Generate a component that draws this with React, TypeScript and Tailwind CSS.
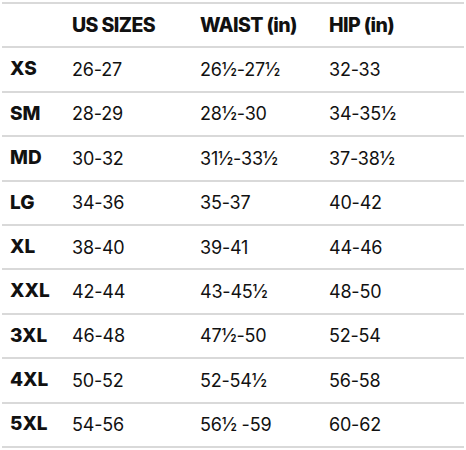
import React from "react";

const rows: [string, string, string, string][] = [
  ["XS", "26-27", "26½-27½", "32-33"],
  ["SM", "28-29", "28½-30", "34-35½"],
  ["MD", "30-32", "31½-33½", "37-38½"],
  ["LG", "34-36", "35-37", "40-42"],
  ["XL", "38-40", "39-41", "44-46"],
  ["XXL", "42-44", "43-45½", "48-50"],
  ["3XL", "46-48", "47½-50", "52-54"],
  ["4XL", "50-52", "52-54½", "56-58"],
  ["5XL", "54-56", "56½ -59", "60-62"],
];

export default function App() {
  return (
    <div
      className="w-[466px] h-[450px] bg-white text-[#111] pt-[2px] px-[2px]"
      style={{ fontFamily: "Inter, 'Liberation Sans', sans-serif" }}
    >
      <div className="border-t-2 border-[#d9d9d9] w-[462px]">
        <div className="flex items-center h-[44.4px] border-b-2 border-[#d9d9d9] text-[19.5px] font-extrabold tracking-[-0.6px]">
          <div className="w-[70px]" />
          <div className="w-[128px]">US SIZES</div>
          <div className="w-[129px]">WAIST (in)</div>
          <div>HIP (in)</div>
        </div>
        {rows.map((r) => (
          <div
            key={r[0]}
            className="flex items-center h-[44.4px] border-b-2 border-[#d9d9d9] text-[18px]"
          >
            <div className="w-[70px] pl-[8px] font-extrabold text-[19px]">{r[0]}</div>
            <div className="w-[128px] tracking-[-0.2px]">{r[1]}</div>
            <div className="w-[129px] tracking-[-0.2px]">{r[2]}</div>
            <div className="tracking-[-0.2px]">{r[3]}</div>
          </div>
        ))}
      </div>
    </div>
  );
}
